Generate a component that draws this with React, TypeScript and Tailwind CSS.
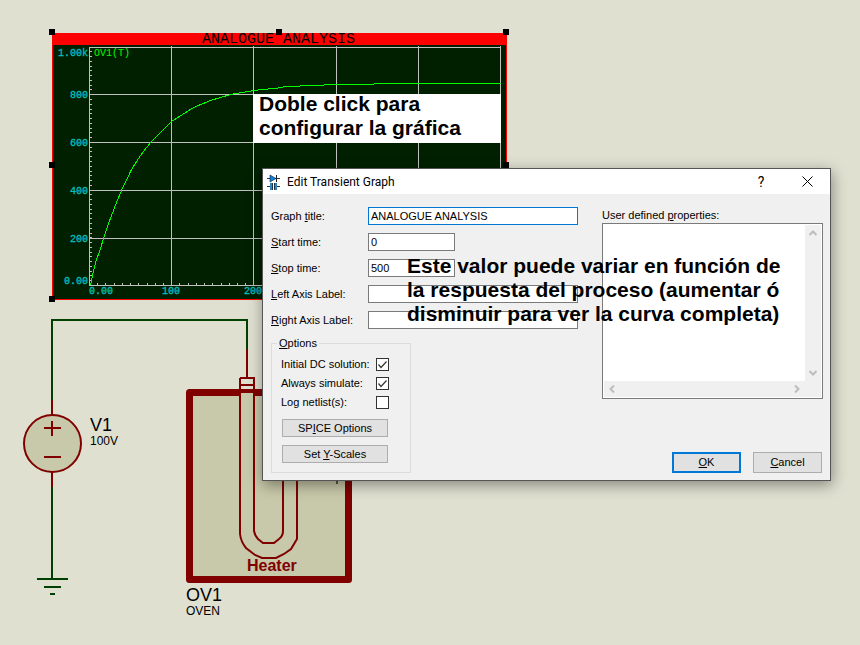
import type { ReactNode } from "react";

const yLabels = [
  { text: "1.00k", y: 56 },
  { text: "800", y: 98 },
  { text: "600", y: 146 },
  { text: "400", y: 194 },
  { text: "200", y: 242 },
  { text: "0.00", y: 284 },
];

const handles = [
  [49, 29],
  [276, 29],
  [503, 29],
  [49, 162],
  [503, 162],
  [49, 296],
];

const yTicks = Array.from({ length: 50 }, (_, i) => Math.round(285 - i * 4.77));
const xTicks = Array.from({ length: 50 }, (_, i) => Math.round(89 + i * 8.22));

function Graph() {
  return (
    <g fontFamily='"Liberation Mono", monospace'>
      <rect x="52" y="33" width="455" height="267" fill="#ff0000" />
      <rect x="53" y="45" width="453" height="254" fill="#002000" />
      <text x="202" y="43" fontSize="15" fill="#000000">
        ANALOGUE ANALYSIS
      </text>
      <g fill="#c0c0c0" shapeRendering="crispEdges">
        <rect x="89" y="47" width="412" height="1" />
        <rect x="89" y="285" width="412" height="1" />
        {[94, 142, 190, 238].map((y) => (
          <rect key={y} x="89" y={y} width="412" height="1" />
        ))}
        <rect x="89" y="47" width="1" height="239" />
        {[171, 253, 336, 418, 500].map((x) => (
          <rect key={x} x={x} y="46" width="1" height="240" />
        ))}
        {yTicks.map((y) => (
          <rect key={y} x="90" y={y} width="2" height="1" />
        ))}
        {xTicks.map((x) => (
          <rect key={x} x={x} y="283" width="1" height="2" />
        ))}
      </g>
      <polyline
        points="90,285 92,275 95,262 100,248 103,238 108,223 116,202 121,190 131,169 140,155 150,142 171,121 193,107 210,100 230,94 253,90 282,87 283,86 299,86 300,85 323,85 324,84 373,84 374,83 500,83"
        transform="translate(0.5 0.5)"
        fill="none"
        stroke="#00ff00"
        strokeWidth="1"
        shapeRendering="crispEdges"
      />
      <g fontSize="10" fill="#00c0c0" stroke="#00c0c0" strokeWidth="0.3">
        {yLabels.map((l) => (
          <text key={l.text} x="88" y={l.y} textAnchor="end">
            {l.text}
          </text>
        ))}
        <text x="89" y="294">
          0.00
        </text>
        <text x="162" y="294">
          100
        </text>
        <text x="244" y="294">
          200
        </text>
      </g>
      <text x="94" y="56" fontSize="10" fill="#00ff00">
        OV1(T)
      </text>
      {handles.map(([x, y]) => (
        <rect key={`${x}-${y}`} x={x} y={y} width="6" height="6" fill="#000000" />
      ))}
    </g>
  );
}

function Circuit() {
  return (
    <g fontFamily='"Liberation Sans", Arial, sans-serif' fill="none" strokeWidth="2">
      <path d="M52 400V320H247V349M52 487V578M37 579H68M44 587H61M50 594H55" stroke="#004000" />
      <path d="M52 400V415M52 472V487M247 349V378" stroke="#800000" />
      <circle cx="52.5" cy="443.5" r="28.5" fill="#c8c8aa" stroke="#800000" />
      <path d="M44 428H61M52 421V436M44 457H61" stroke="#800000" />
      <rect
        x="189.5"
        y="392.5"
        width="159"
        height="187"
        fill="#c8c8aa"
        stroke="#800000"
        strokeWidth="7"
        strokeLinejoin="round"
      />
      <rect x="240" y="378" width="14" height="11" fill="#dfe0d0" />
      <rect x="240" y="393" width="14" height="4" fill="#c8c8aa" />
      <path
        d="M240 378H254V531Q255 536 258 539L263 543H274L279 539Q283 536 283 531V440M240 378V534Q241 542 246 548L255 555L262 558H276L284 554L291 549L297 539V440M240 385H254"
        stroke="#800000"
      />
      <rect x="336" y="480" width="2" height="4" fill="#555544" />
      <g fill="#000000">
        <text x="90" y="431" fontSize="18">
          V1
        </text>
        <text x="90" y="445" fontSize="12">
          100V
        </text>
        <text x="186" y="601" fontSize="18">
          OV1
        </text>
        <text x="186" y="615" fontSize="12">
          OVEN
        </text>
      </g>
      <text x="247" y="571" fontSize="16" fontWeight="bold" fill="#800000">
        Heater
      </text>
    </g>
  );
}

function DialogIcon() {
  return (
    <svg width="13" height="16" viewBox="0 0 13 16" aria-hidden="true">
      <path d="M0 4.5H13M0 12.5H4M9 12.5H13" stroke="#333" fill="none" />
      <path d="M3 1V8L9 4.5Z" fill="#0f7fe0" stroke="#123" strokeWidth="0.6" />
      <path d="M9.5 1V8" stroke="#222" />
      <rect x="3" y="9" width="3" height="7" fill="#2f86c0" />
      <rect x="7" y="9" width="3" height="7" fill="#2f86c0" />
      <path d="M5.5 9V16M7.5 9V16" stroke="#234" />
    </svg>
  );
}

function Field({
  id,
  label,
  value,
  short,
  focused,
}: {
  id: string;
  label: ReactNode;
  value?: string;
  short?: boolean;
  focused?: boolean;
}) {
  return (
    <>
      <label htmlFor={id} className="leading-[18px]">
        {label}
      </label>
      <input
        id={id}
        type="text"
        defaultValue={value}
        className={`h-[18px] border bg-white px-0.5 outline-none ${short ? "w-[87px]" : "w-full"} ${
          focused ? "border-[#0078d7]" : "border-[#7a7a7a]"
        }`}
      />
    </>
  );
}

function Check({ label, checked }: { label: string; checked?: boolean }) {
  return (
    <label className="flex h-[13px] items-center justify-between">
      {label}
      <span className="grid">
        <input
          type="checkbox"
          defaultChecked={checked}
          className="peer col-start-1 row-start-1 size-[13px] appearance-none border border-[#333333] bg-white"
        />
        <svg
          viewBox="0 0 13 13"
          className="pointer-events-none invisible col-start-1 row-start-1 size-[13px] peer-checked:visible"
          aria-hidden="true"
        >
          <path d="M2.5 6.5L5 9.5L10.5 3.5" fill="none" stroke="#333" strokeWidth="1.2" />
        </svg>
      </span>
    </label>
  );
}

function Chevron({ d }: { d: string }) {
  return (
    <svg width="8" height="8" viewBox="0 0 8 8" aria-hidden="true">
      <path d={d} fill="none" stroke="#bdbdbd" strokeWidth="2" />
    </svg>
  );
}

function Dialog() {
  return (
    <section
      role="dialog"
      aria-label="Edit Transient Graph"
      className="absolute top-[168px] left-[262px] w-[569px] border border-[#555555] bg-[#f0f0f0] text-[11px] text-black shadow-[1px_4px_14px_rgba(0,0,0,0.4)]"
    >
      <header className="flex h-[25px] items-center bg-white pl-1 font-[Roboto,sans-serif]">
        <DialogIcon />
        <h1 className="ml-[7px] flex-1 text-xs">Edit Transient Graph</h1>
        <button type="button" aria-label="Help" className="w-[46px] text-sm">
          ?
        </button>
        <button type="button" aria-label="Close" className="grid w-[46px] place-items-center">
          <svg width="11" height="11" viewBox="0 0 11 11" aria-hidden="true">
            <path d="M0.5 0.5L10.5 10.5M10.5 0.5L0.5 10.5" stroke="#000" fill="none" />
          </svg>
        </button>
      </header>
      <form className="flex gap-6 pt-[13px] pr-[7px] pb-[7px] pl-2">
        <div className="w-[307px]">
          <div className="grid grid-cols-[97px_1fr] gap-y-2">
            <Field id="title" label={<>Graph <u>t</u>itle:</>} value="ANALOGUE ANALYSIS" focused />
            <Field id="start" label={<><u>S</u>tart time:</>} value="0" short />
            <Field id="stop" label={<><u>S</u>top time:</>} value="500" short />
            <Field id="left" label={<><u>L</u>eft Axis Label:</>} />
            <Field id="right" label={<><u>R</u>ight Axis Label:</>} />
          </div>
          <fieldset className="mt-2 w-[140px] border border-[#dcdcdc] px-[9px] pb-[9px]">
            <legend className="-ml-1 px-0.5 leading-3">
              <u>O</u>ptions
            </legend>
            <div className="flex flex-col gap-1.5 pt-[9px] pr-3">
              <Check label="Initial DC solution:" checked />
              <Check label="Always simulate:" checked />
              <Check label="Log netlist(s):" />
            </div>
            <div className="mt-2.5 flex flex-col gap-2 pr-[13px] pl-px">
              <button type="button" className="h-[18px] border border-[#adadad] bg-[#e1e1e1] leading-4">
                SP<u>I</u>CE Options
              </button>
              <button type="button" className="h-[18px] border border-[#adadad] bg-[#e1e1e1] leading-4">
                Set <u>Y</u>-Scales
              </button>
            </div>
          </fieldset>
        </div>
        <div className="flex flex-1 flex-col">
          <label htmlFor="props" className="leading-4">
            User defined <u>p</u>roperties:
          </label>
          <div className="grid h-[176px] grid-cols-[1fr_16px] grid-rows-[1fr_16px] border border-[#7a7a7a] bg-white p-px">
            <textarea id="props" className="resize-none bg-white outline-none" />
            <div className="flex flex-col items-center justify-between bg-[#f0f0f0] py-1">
              <Chevron d="M0.5 6L4 2.5L7.5 6" />
              <Chevron d="M0.5 2L4 5.5L7.5 2" />
            </div>
            <div className="flex items-center justify-between bg-[#f0f0f0] px-1">
              <Chevron d="M6 0.5L2.5 4L6 7.5" />
              <Chevron d="M2 0.5L5.5 4L2 7.5" />
            </div>
            <div className="bg-[#f0f0f0]" />
          </div>
          <div className="mt-auto flex justify-end gap-3 pr-px">
            <button type="submit" className="h-[21px] w-[69px] border-2 border-[#0078d7] bg-[#e1e1e1]">
              <u>O</u>K
            </button>
            <button type="button" className="h-[21px] w-[69px] border border-[#adadad] bg-[#e1e1e1]">
              <u>C</u>ancel
            </button>
          </div>
        </div>
      </form>
    </section>
  );
}

export default function App() {
  return (
    <main className="relative min-h-screen overflow-hidden bg-[#dfe0d0] font-['Liberation_Sans',Arial,sans-serif]">
      <svg width="520" height="645" viewBox="0 0 520 645" className="block">
        <Graph />
        <Circuit />
      </svg>
      <div className="absolute top-[94px] left-[253px] h-[49px] w-[248px] bg-white pl-1.5 text-[21px] leading-6 font-bold text-black">
        <p className="-mt-0.5">
          Doble click para
          <br />
          configurar la gráfica
        </p>
      </div>
      <Dialog />
      <p className="pointer-events-none absolute top-[254px] left-[407px] text-[21px] leading-6 font-bold whitespace-nowrap text-black">
        Este valor puede variar en función de
        <br />
        la respuesta del proceso (aumentar ó
        <br />
        disminuir para ver la curva completa)
      </p>
    </main>
  );
}
